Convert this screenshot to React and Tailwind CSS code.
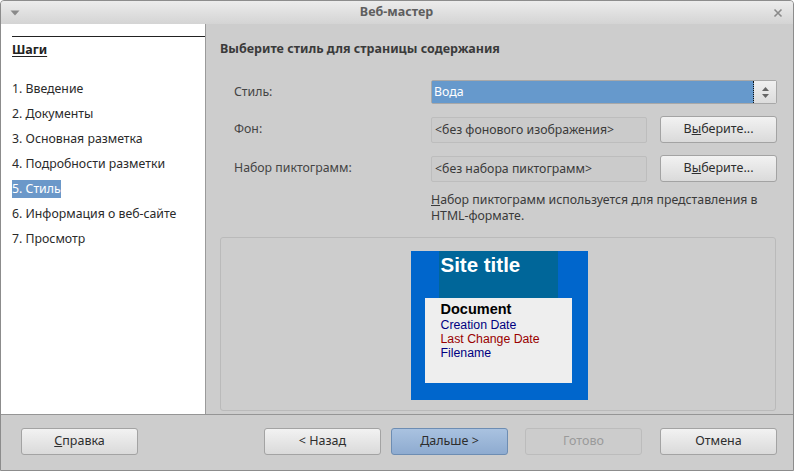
const steps = [
  "1. Введение",
  "2. Документы",
  "3. Основная разметка",
  "4. Подробности разметки",
  "5. Стиль",
  "6. Информация о веб-сайте",
  "7. Просмотр"
];

function Button({ children, className = "", variant = "default" }) {
  const styles = {
    default: "border-[#a3a3a3] bg-gradient-to-b from-[#f2f2f2] to-[#dadada] text-[#2e2e2e]",
    primary: "border-[#6d8db3] bg-gradient-to-b from-[#a9c2e0] to-[#8eabd0] text-[#2e2e2e]",
    disabled: "border-[#bcbcbc] bg-[#cccccc] text-[#9a9a9a]"
  };
  return (
    <div
      className={`flex h-[27px] w-[117px] items-center justify-center rounded-[3px] border text-[12.5px] ${styles[variant]} ${className}`}
    >
      {children}
    </div>
  );
}

function Field({ children }) {
  return (
    <div className="flex h-[26px] w-[216px] items-start rounded-[2px] border border-[#bdbdbd] bg-[#cbcbcb] px-[3px] pt-[3px] text-[12.3px] leading-[18px] text-[#3a3a3a]">
      {children}
    </div>
  );
}

export default function App() {
  return (
    <div
      className="flex h-[471px] w-[794px] flex-col overflow-hidden rounded-t-[4px] border border-[#8c8c8c] bg-[#cdcdcd] text-[#333]"
      style={{ fontFamily: '"Noto Sans", "Open Sans", sans-serif' }}
    >
      {/* title bar */}
      <div className="flex h-[23px] shrink-0 items-center bg-gradient-to-b from-[#ececec] to-[#d4d4d4] px-[9px]">
        <svg width="10" height="6" viewBox="0 0 10 6">
          <path d="M0.5 0.5 L9.5 0.5 L5 5.5 Z" fill="#8a8a8a" />
        </svg>
        <div className="flex-1 text-center text-[12.5px] font-bold text-[#5e5e5e]">Веб-мастер</div>
        <svg width="10" height="10" viewBox="0 0 10 10" className="mr-[1px]">
          <path d="M1.5 1.5 L8.5 8.5 M8.5 1.5 L1.5 8.5" stroke="#8a8a8a" strokeWidth="1.6" />
        </svg>
      </div>

      {/* body */}
      <div className="flex h-[390px] shrink-0">
        <div className="w-[205px] shrink-0 border-r border-[#9a9a9a] bg-white pl-[11px]">
          <div className="mt-[12px] border-t border-[#222]" />
          <div className="mt-[4px] text-[12.5px] font-bold leading-[18px] text-[#222]">
            <span className="underline underline-offset-2">Шаги</span>
          </div>
          <div className="mt-[17px] flex flex-col text-[12.3px] text-[#2a2a2a]">
            {steps.map((s, i) => (
              <div key={s} className="flex h-[25px] items-center">
                <span className={i === 4 ? "bg-[#6b98c9] leading-[18px] text-white" : "leading-[18px]"}>
                  {s}
                </span>
              </div>
            ))}
          </div>
        </div>

        <div className="flex-1 pl-[14px]">
          <div className="mt-[16px] text-[12.5px] font-bold leading-[18px] text-[#3a3a3a]">
            Выберите стиль для страницы содержания
          </div>

          <div className="mt-[22px] grid grid-cols-[197px_1fr] items-center gap-y-[12px] pl-[14px] pr-[16px] text-[12.3px] text-[#444]">
            <div>Стиль:</div>
            <div className="flex h-[24px] items-stretch rounded-[2px] border border-[#a8a8a8] bg-[#e6e6e6]">
              <div className="flex flex-1 items-center border-r border-dotted border-r-[#111] bg-[#6699cc] pl-[2px] text-white">
                Вода
              </div>
              <div className="flex w-[22px] flex-col items-center justify-center gap-[3px] bg-gradient-to-b from-[#f0f0f0] to-[#dcdcdc]">
                <svg width="7" height="4" viewBox="0 0 7 4">
                  <path d="M0 4 L3.5 0 L7 4 Z" fill="#666" />
                </svg>
                <svg width="7" height="4" viewBox="0 0 7 4">
                  <path d="M0 0 L3.5 4 L7 0 Z" fill="#666" />
                </svg>
              </div>
            </div>

            <div>Фон:</div>
            <div className="flex items-center justify-between">
              <Field>&lt;без фонового изображения&gt;</Field>
              <Button className="w-[98px]">
                <span>
                  В<span className="underline">ы</span>берите...
                </span>
              </Button>
            </div>

            <div>Набор пиктограмм:</div>
            <div className="flex items-center justify-between">
              <Field>&lt;без набора пиктограмм&gt;</Field>
              <Button className="w-[98px]">
                <span>
                  В<span className="underline">ы</span>берите...
                </span>
              </Button>
            </div>

            <div />
            <div className="-mt-[2px] text-[12.3px] leading-[16px] text-[#3a3a3a]">
              <span className="underline">Н</span>абор пиктограмм используется для представления в
              <br />
              HTML-формате.
            </div>
          </div>

          <div className="mt-[13px] flex h-[174px] w-[556px] justify-center rounded-[3px] border border-[#bababa] pt-[13px] pl-[2px]">
            <div className="flex h-[149px] w-[177px] flex-col bg-[#0066cc]">
              <div
                className="ml-[28px] h-[47px] w-[119px] bg-[#006699] pl-[2px] text-[20.5px] font-bold leading-[28px] text-white"
                style={{ fontFamily: '"Liberation Sans", Arial, sans-serif' }}
              >
                Site title
              </div>
              <div
                className="ml-[14px] h-[85px] w-[147px] bg-[#eeeeee] pl-[16px] pt-[3px]"
                style={{ fontFamily: '"Liberation Sans", Arial, sans-serif' }}
              >
                <div className="text-[14.5px] font-bold leading-[17px] text-black">Document</div>
                <div className="text-[12.3px] leading-[14px] text-[#000080]">Creation Date</div>
                <div className="text-[12.3px] leading-[14px] text-[#990000]">Last Change Date</div>
                <div className="text-[12.3px] leading-[14px] text-[#000080]">Filename</div>
              </div>
            </div>
          </div>
        </div>
      </div>

      {/* footer */}
      <div className="flex flex-1 items-center border-t border-[#959595] pl-[20px] pb-[2px]">
        <Button>
          <span>
            <span className="underline">С</span>правка
          </span>
        </Button>
        <Button className="ml-[126px]">&lt; Назад</Button>
        <Button variant="primary" className="ml-[10px]">Дальше &gt;</Button>
        <Button variant="disabled" className="ml-[17px]">Готово</Button>
        <Button className="ml-[18px]">Отмена</Button>
      </div>
    </div>
  );
}
